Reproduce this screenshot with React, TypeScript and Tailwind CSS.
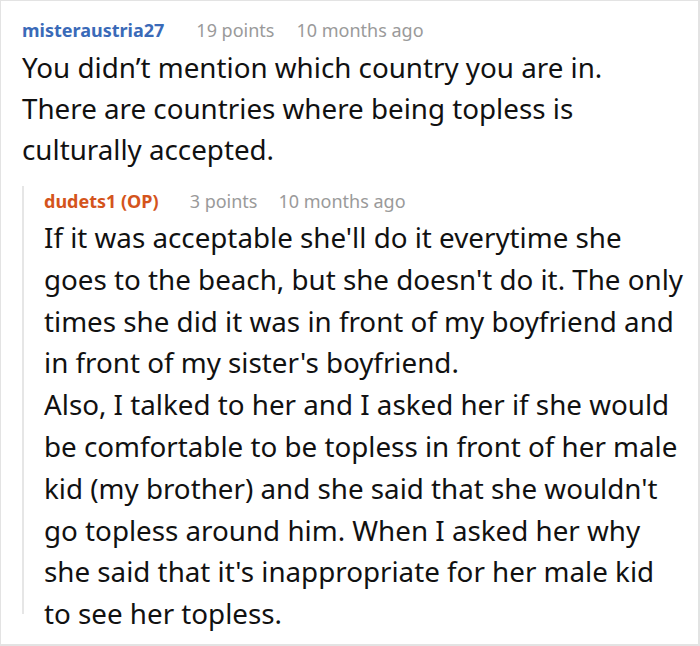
import React from "react";

export default function App() {
  const font = { fontFamily: '"Noto Sans", sans-serif' };
  return (
    <div className="w-[700px] h-[646px] bg-white" style={font}>
      <div className="w-full h-full border-t border-l border-r-2 border-b-2 border-[#e3e3e3] pl-[21px] pr-[10px] pt-[14px]">
        <div className="flex items-baseline text-[18px] leading-[30px] whitespace-nowrap">
          <span className="font-bold text-[#3a6ab8]">misteraustria27</span>
          <span className="ml-[32px] text-[#9a9a9a]">19 points</span>
          <span className="ml-[22px] text-[#9a9a9a]">10 months ago</span>
        </div>
        <p className="mt-[2px] text-[27.75px] leading-[41px] text-[#111]">
          You didn’t mention which country you are in.
          <br />
          There are countries where being topless is culturally accepted.
        </p>
        <div className="mt-[30px] border-l-2 border-[#e6e6e6] pl-[20px] h-[428px]">
          <div className="-mt-[14px] flex items-baseline text-[18px] leading-[30px] whitespace-nowrap">
            <span className="font-bold text-[#d4541c]">dudets1 (OP)</span>
            <span className="ml-[31px] text-[#9a9a9a]">3 points</span>
            <span className="ml-[21px] text-[#9a9a9a]">10 months ago</span>
          </div>
          <p className="mt-[1px] text-[27.75px] leading-[41.8px] text-[#111]">
            If it was acceptable she'll do it everytime she goes to the beach, but she doesn't do it. The only times she did it was in front of my boyfriend and in front of my sister's boyfriend.
            <br />
            Also, I talked to her and I asked her if she would be comfortable to be topless in front of her male kid (my brother) and she said that she wouldn't go topless around him. When I asked her why she said that it's inappropriate for her male kid to see her topless.
          </p>
        </div>
      </div>
    </div>
  );
}
